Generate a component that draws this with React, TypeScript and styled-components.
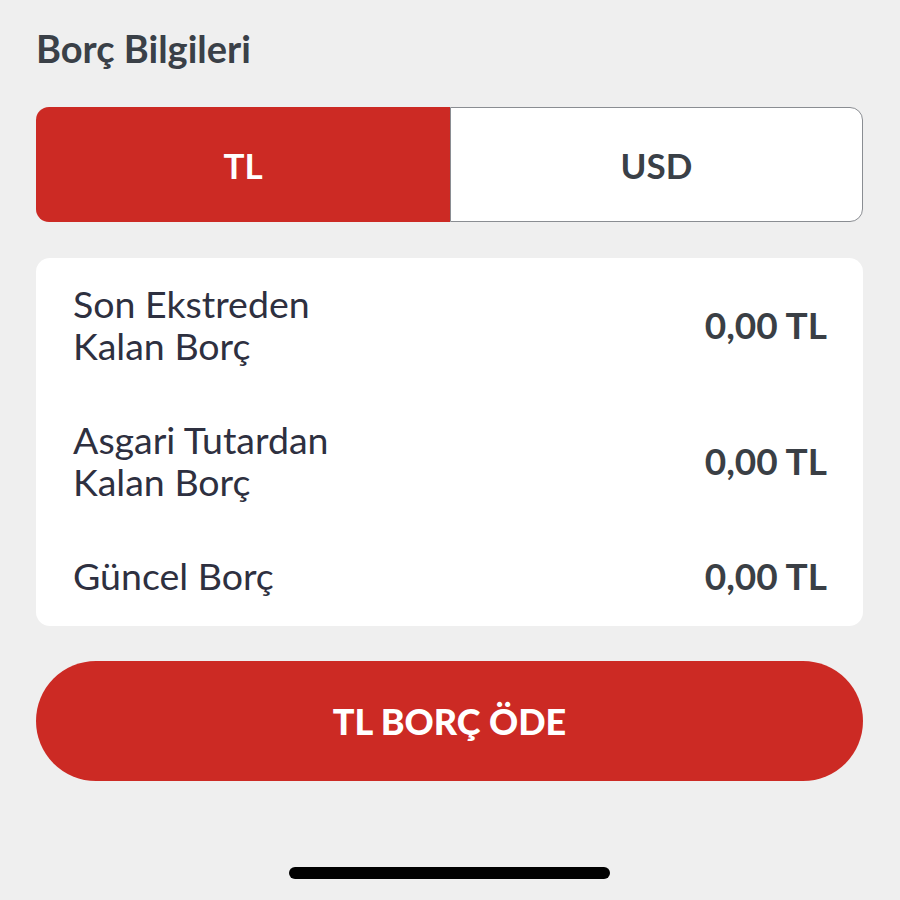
import React, { useState } from 'react';
import styled, { createGlobalStyle } from 'styled-components';

const GlobalStyle = createGlobalStyle`
  html, body {
    margin: 0;
    padding: 0;
    background: #efefef;
  }
  body {
    font-family: Lato, "Noto Sans", "Liberation Sans", sans-serif;
    -webkit-font-smoothing: antialiased;
  }
`;

const RED = '#cc2a24';

const Page = styled.div`
  width: 900px;
  height: 900px;
  box-sizing: border-box;
  padding: 26px 37px 0 36px;
  display: flex;
  flex-direction: column;
  background: #efefef;
`;

const Title = styled.h1`
  margin: 0;
  font-size: 38px;
  line-height: 44px;
  font-weight: 700;
  color: #3a4047;
`;

const Toggle = styled.div`
  margin-top: 37px;
  height: 115px;
  display: grid;
  grid-template-columns: 414px 1fr;
`;

const ToggleButton = styled.button<{ $active: boolean; $side: 'left' | 'right' }>`
  margin: 0;
  font-family: inherit;
  font-size: 35px;
  font-weight: 700;
  cursor: pointer;
  background: ${p => (p.$active ? RED : '#fff')};
  color: ${p => (p.$active ? '#fff' : '#3a4047')};
  border: ${p => (p.$active ? 'none' : '1.5px solid #8a8d92')};
  border-radius: ${p => (p.$side === 'left' ? '13px 0 0 13px' : '0 13px 13px 0')};
`;

const Card = styled.div`
  margin-top: 36px;
  background: #fff;
  border-radius: 14px;
  padding: 25px 36px 29px 37px;
  display: flex;
  flex-direction: column;
  gap: 52px;
`;

const Row = styled.div`
  display: flex;
  align-items: center;
  justify-content: space-between;
`;

const Label = styled.div`
  font-size: 37.5px;
  line-height: 42px;
  color: #2e3040;
  white-space: pre-line;
`;

const Value = styled.div`
  font-size: 37px;
  line-height: 42px;
  font-weight: 700;
  color: #3a3f45;
`;

const PayButton = styled.button`
  margin-top: 35px;
  height: 120px;
  border: none;
  border-radius: 60px;
  background: ${RED};
  color: #fff;
  font-family: inherit;
  font-size: 36px;
  font-weight: 900;
  cursor: pointer;
`;

const HomeBar = styled.div`
  margin: 86px auto 0;
  width: 321px;
  height: 12px;
  border-radius: 6px;
  background: #000;
`;

const rows = [
  { label: 'Son Ekstreden\nKalan Borç', value: '0,00 TL' },
  { label: 'Asgari Tutardan\nKalan Borç', value: '0,00 TL' },
  { label: 'Güncel Borç', value: '0,00 TL' },
];

export default function App() {
  const [currency, setCurrency] = useState<'TL' | 'USD'>('TL');

  return (
    <>
      <GlobalStyle />
      <Page>
        <Title>Borç Bilgileri</Title>
        <Toggle>
          <ToggleButton $side="left" $active={currency === 'TL'} onClick={() => setCurrency('TL')}>
            TL
          </ToggleButton>
          <ToggleButton $side="right" $active={currency === 'USD'} onClick={() => setCurrency('USD')}>
            USD
          </ToggleButton>
        </Toggle>
        <Card>
          {rows.map((r, i) => (
            <Row key={i}>
              <Label>{r.label}</Label>
              <Value>{r.value}</Value>
            </Row>
          ))}
        </Card>
        <PayButton>{currency} BORÇ ÖDE</PayButton>
        <HomeBar />
      </Page>
    </>
  );
}
